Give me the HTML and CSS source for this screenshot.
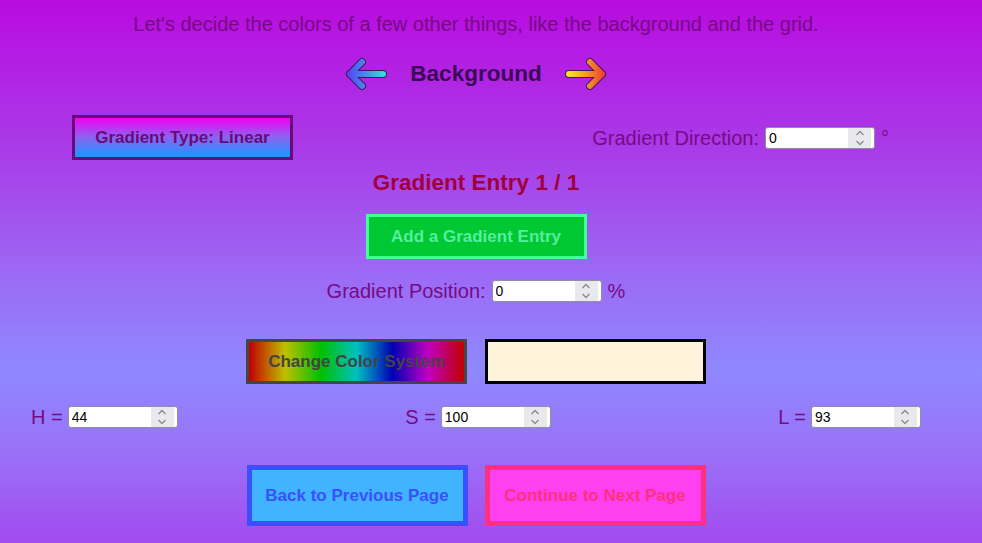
FILE: index.html
```html
<!DOCTYPE html>
<html lang="en">
<head>
<meta charset="utf-8">
<title>Background</title>
<link rel="stylesheet" href="styles.css">
</head>
<body>
<main class="page">
  <p class="intro">Let's decide the colors of a few other things, like the background and the grid.</p>

  <div class="title-row">
    <button class="arrow-btn" aria-label="Previous">
      <svg width="42" height="36" viewBox="0 0 42 36">
        <defs>
          <linearGradient id="gl" gradientUnits="userSpaceOnUse" x1="2" y1="0" x2="40" y2="0">
            <stop offset="0" stop-color="#5a3ff2"/>
            <stop offset="1" stop-color="#2ee0e6"/>
          </linearGradient>
        </defs>
        <path d="M38 18 H5 M17 6 L5 18 L17 30" fill="none" stroke="#3a1a58" stroke-width="8" stroke-linecap="round" stroke-linejoin="round"/>
        <path d="M38 18 H5 M17 6 L5 18 L17 30" fill="none" stroke="url(#gl)" stroke-width="6" stroke-linecap="round" stroke-linejoin="round"/>
      </svg>
    </button>
    <h1 class="title">Background</h1>
    <button class="arrow-btn" aria-label="Next">
      <svg width="42" height="36" viewBox="0 0 42 36">
        <defs>
          <linearGradient id="gr" gradientUnits="userSpaceOnUse" x1="2" y1="0" x2="40" y2="0">
            <stop offset="0" stop-color="#f6ea1e"/>
            <stop offset="0.5" stop-color="#f49a2a"/>
            <stop offset="1" stop-color="#f03a32"/>
          </linearGradient>
        </defs>
        <path d="M4 18 H37 M25 6 L37 18 L25 30" fill="none" stroke="#3a1a58" stroke-width="8" stroke-linecap="round" stroke-linejoin="round"/>
        <path d="M4 18 H37 M25 6 L37 18 L25 30" fill="none" stroke="url(#gr)" stroke-width="6" stroke-linecap="round" stroke-linejoin="round"/>
      </svg>
    </button>
  </div>

  <div class="type-row">
    <button class="btn btn-type">Gradient Type: Linear</button>
    <label class="field">
      <span>Gradient Direction:</span>
      <span class="num"><input class="num-input" type="text" value="0"><span class="spin"><svg width="10" height="18" viewBox="0 0 10 18"><path d="M1.5 6 L5 2.5 L8.5 6 M1.5 12 L5 15.5 L8.5 12" fill="none" stroke="#8a8a8e" stroke-width="1.3"/></svg></span></span>
      <span>°</span>
    </label>
  </div>

  <h2 class="entry">Gradient Entry 1 / 1</h2>

  <button class="btn btn-add">Add a Gradient Entry</button>

  <label class="field pos-row">
    <span>Gradient Position:</span>
    <span class="num"><input class="num-input" type="text" value="0"><span class="spin"><svg width="10" height="18" viewBox="0 0 10 18"><path d="M1.5 6 L5 2.5 L8.5 6 M1.5 12 L5 15.5 L8.5 12" fill="none" stroke="#8a8a8e" stroke-width="1.3"/></svg></span></span>
    <span>%</span>
  </label>

  <div class="color-row">
    <button class="btn btn-system">Change Color System</button>
    <div class="swatch"></div>
  </div>

  <div class="hsl-row">
    <label class="field hsl">
      <span>H =</span>
      <span class="num"><input class="num-input" type="text" value="44"><span class="spin"><svg width="10" height="18" viewBox="0 0 10 18"><path d="M1.5 6 L5 2.5 L8.5 6 M1.5 12 L5 15.5 L8.5 12" fill="none" stroke="#8a8a8e" stroke-width="1.3"/></svg></span></span>
    </label>
    <label class="field hsl">
      <span>S =</span>
      <span class="num"><input class="num-input" type="text" value="100"><span class="spin"><svg width="10" height="18" viewBox="0 0 10 18"><path d="M1.5 6 L5 2.5 L8.5 6 M1.5 12 L5 15.5 L8.5 12" fill="none" stroke="#8a8a8e" stroke-width="1.3"/></svg></span></span>
    </label>
    <label class="field hsl">
      <span>L =</span>
      <span class="num"><input class="num-input" type="text" value="93"><span class="spin"><svg width="10" height="18" viewBox="0 0 10 18"><path d="M1.5 6 L5 2.5 L8.5 6 M1.5 12 L5 15.5 L8.5 12" fill="none" stroke="#8a8a8e" stroke-width="1.3"/></svg></span></span>
    </label>
  </div>

  <div class="nav-row">
    <button class="btn btn-nav btn-back">Back to Previous Page</button>
    <button class="btn btn-nav btn-next">Continue to Next Page</button>
  </div>
</main>
</body>
</html>
```

FILE: styles.css
```css
* { box-sizing: border-box; }

html, body {
  margin: 0;
  height: 100%;
}

body {
  background: linear-gradient(180deg,
    #b90be0 0%,
    #a93ce8 28%,
    #9b6cf5 52%,
    #8f88ff 68%,
    #9a70f8 84%,
    #a24aee 100%);
  font-family: "Liberation Sans", Arial, sans-serif;
  color: #770a85;
  overflow: hidden;
}

.page {
  width: 952px;
  display: flex;
  flex-direction: column;
  align-items: center;
}

.intro {
  margin: 13px 0 0;
  font-size: 20px;
  line-height: 23px;
}

.title-row {
  margin-top: 20px;
  height: 36px;
  display: flex;
  align-items: center;
  gap: 23px;
}

.arrow-btn {
  background: none;
  border: 0;
  padding: 0;
  display: flex;
  cursor: pointer;
}

.title {
  margin: 0;
  font-size: 22.5px;
  line-height: 26px;
  font-weight: bold;
  color: #3a0a55;
}

.type-row {
  width: 100%;
  margin-top: 23px;
  padding: 0 63px 0 72px;
  display: flex;
  justify-content: space-between;
  align-items: center;
}

.btn {
  width: 221px;
  height: 45px;
  border: 3px solid;
  padding: 0;
  font-family: "Liberation Sans", Arial, sans-serif;
  font-size: 17px;
  font-weight: bold;
  cursor: pointer;
}

.btn-type {
  background: linear-gradient(180deg, #f400f0 0%, #8a64f2 50%, #1898ff 100%);
  border-color: #6a0a78;
  color: #6a0a78;
}

.field {
  display: flex;
  align-items: center;
  gap: 6px;
  font-size: 20px;
  line-height: 24px;
}

.num {
  display: inline-flex;
  align-items: stretch;
  width: 110px;
  height: 22px;
  padding: 0 3px 0 3px;
  background: #fff;
  border: 1px solid #8f8f9d;
  border-radius: 3px;
}

.num-input {
  flex: 1;
  min-width: 0;
  border: 0;
  outline: 0;
  padding: 0;
  background: transparent;
  font-family: "Liberation Sans", Arial, sans-serif;
  font-size: 14px;
  color: #000;
}

.spin {
  width: 23px;
  background: #e9e9ed;
  display: flex;
  align-items: center;
  justify-content: center;
}

.entry {
  margin: 10px 0 0;
  font-size: 22.5px;
  line-height: 26px;
  font-weight: bold;
  color: #a2003c;
}

.btn-add {
  margin-top: 18px;
  background: #00c832;
  border-color: #44ff99;
  color: #55ee9e;
}

.pos-row {
  margin-top: 20px;
}

.color-row {
  margin-top: 36px;
  display: flex;
  gap: 18px;
}

.btn-system {
  border-color: #454545;
  color: #444;
  background: linear-gradient(90deg,
    #c00000 0%,
    #c0c000 16.7%,
    #00c000 33.3%,
    #00c0c0 50%,
    #0000b4 66.7%,
    #c000c0 83.3%,
    #c00000 100%);
}

.swatch {
  width: 221px;
  height: 45px;
  border: 3px solid #000;
  background: #fff3dc;
}

.hsl-row {
  width: 100%;
  margin-top: 21px;
  padding: 0 31px;
  display: flex;
  justify-content: space-between;
}

.hsl {
  gap: 5px;
}

.nav-row {
  margin-top: 36px;
  display: flex;
  gap: 17px;
}

.btn-nav {
  height: 61px;
  border-width: 5px;
}

.btn-back {
  background: #40b4ff;
  border-color: #3a50ff;
  color: #3a50ff;
}

.btn-next {
  background: #ff40f0;
  border-color: #ff3080;
  color: #ff3080;
}
```
